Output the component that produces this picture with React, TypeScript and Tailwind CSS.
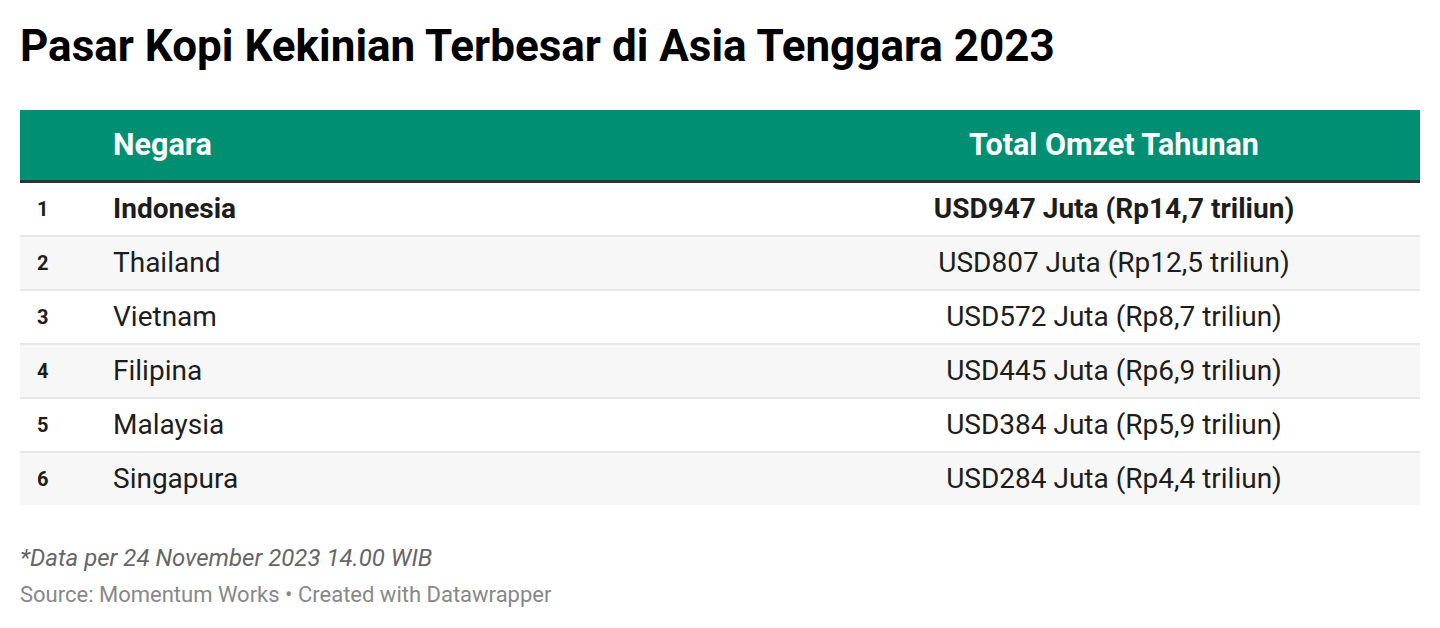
import React from "react";

const rows = [
  { n: 1, c: "Indonesia", v: "USD947 Juta (Rp14,7 triliun)", bold: true },
  { n: 2, c: "Thailand", v: "USD807 Juta (Rp12,5 triliun)" },
  { n: 3, c: "Vietnam", v: "USD572 Juta (Rp8,7 triliun)" },
  { n: 4, c: "Filipina", v: "USD445 Juta (Rp6,9 triliun)" },
  { n: 5, c: "Malaysia", v: "USD384 Juta (Rp5,9 triliun)" },
  { n: 6, c: "Singapura", v: "USD284 Juta (Rp4,4 triliun)" },
];

export default function App() {
  return (
    <div className="w-[1440px] h-[628px] bg-white px-[20px] pt-[20px] text-[#1d1d1d]" style={{ fontFamily: "Roboto, 'Liberation Sans', sans-serif" }}>
      <h1 className="text-[44px] font-bold leading-[52px] text-black">Pasar Kopi Kekinian Terbesar di Asia Tenggara 2023</h1>
      <div className="mt-[38px] w-[1400px]">
        <div className="flex h-[70px] items-center bg-[#008f73] border-b-[3px] border-[#333333] box-content text-white font-bold text-[30.5px]">
          <div className="w-[93px]" />
          <div className="flex-1">Negara</div>
          <div className="w-[612px] text-center">Total Omzet Tahunan</div>
        </div>
        {rows.map((r, i) => (
          <div
            key={r.n}
            className={`flex items-center h-[52px] text-[28px] ${i % 2 === 1 ? "bg-[#f7f7f7]" : "bg-white"} ${i < rows.length - 1 ? "border-b-2 border-[#e8e8e8] box-content" : ""}`}
          >
            <div className="w-[93px] pl-[17px] text-[20px] font-bold">{r.n}</div>
            <div className={`flex-1 ${r.bold ? "font-bold" : ""}`}>{r.c}</div>
            <div className={`w-[612px] text-center ${r.bold ? "font-bold" : ""}`}>{r.v}</div>
          </div>
        ))}
      </div>
      <div className="mt-[38px] italic text-[24px] text-[#666666] leading-[30px]">*Data per 24 November 2023 14.00 WIB</div>
      <div className="mt-[8px] text-[22px] text-[#888888] leading-[28px]">Source: Momentum Works • Created with Datawrapper</div>
    </div>
  );
}
